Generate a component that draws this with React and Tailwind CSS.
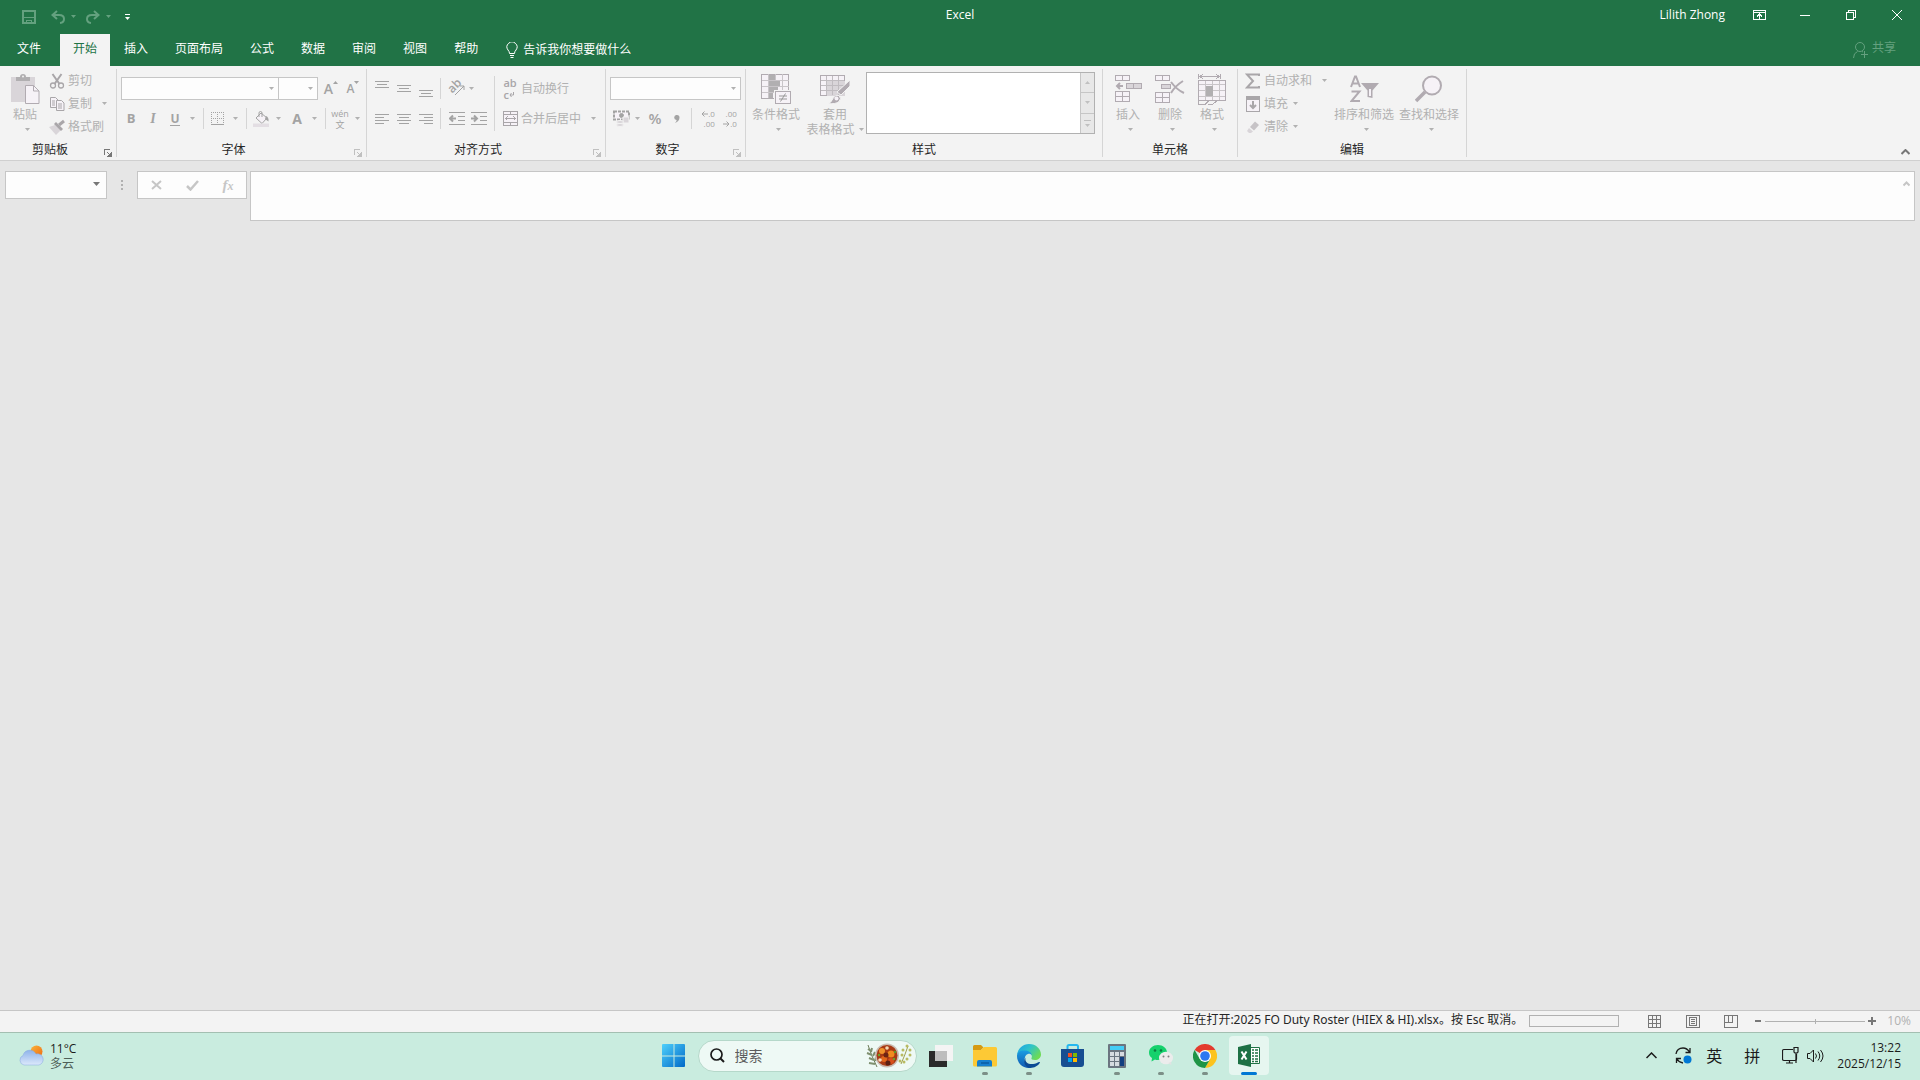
//React
import { useState } from "react";

//* Shared bits
const Caret = ({ className = "" }) => (
  <svg width="5" height="3" viewBox="0 0 5 3" className={className} aria-hidden="true">
    <path d="M0 0h5L2.500 3z" fill="currentColor" />
  </svg>
);

const Svg = ({ w = 16, h = 16, children, className = "", crisp = false }) => (
  <svg
    width={w}
    height={h}
    viewBox={`0 0 ${w} ${h}`}
    fill="none"
    stroke="currentColor"
    shapeRendering={crisp ? "crispEdges" : "auto"}
    className={"shrink-0 " + className}
    aria-hidden="true"
  >
    {children}
  </svg>
);

const IconButton = ({ label, children }) => (
  <button type="button" aria-label={label} className="flex h-[22px] w-[22px] items-center justify-center text-[#a3a3a3]">
    {children}
  </button>
);

const CaretButton = ({ label }) => (
  <button type="button" aria-label={label} className="flex h-[22px] w-[14px] items-center pl-1">
    <Caret />
  </button>
);

const Divider = () => <div className="mx-[3px] h-[21px] w-px bg-[#d5d5d5]" />;

// Small row with an icon and a text
const SmallButton = ({ icon, text, caret }) => (
  <button type="button" className="flex h-[23px] items-center gap-[3px] whitespace-nowrap">
    <span className="flex w-4 justify-center text-[#a9a6a9]">{icon}</span>
    {text}
    {caret && <Caret className={caret} />}
  </button>
);

// Tall button, icon above the text
const BigButton = ({ icon, text, text2, className = "" }) => (
  <button type="button" className={"flex flex-col items-center whitespace-nowrap leading-[15px] " + className}>
    <span className="flex h-[38px] items-center pt-0.5 text-[#b1abb1]">{icon}</span>
    <span>{text}</span>
    <span className="flex h-[14px] items-center gap-1">
      {text2}
      <Caret className={text2 ? "" : "ml-1"} />
    </span>
  </button>
);

const Group = ({ name, launcher, dark, className, children }) => (
  <section className={"flex h-[88px] shrink-0 flex-col border-r border-[#d5d5d5] " + className}>
    <div className="flex flex-1">{children}</div>
    <div className="flex h-4 items-center">
      <h2 className="flex-1 pt-0.5 text-center leading-4 text-[#262626]">{name}</h2>
      {launcher && (
        <button
          type="button"
          aria-label={name + "设置"}
          className={"flex h-4 w-4 items-end justify-center " + (dark ? "text-[#777777]" : "text-[#c0c0c0]")}
        >
          <Svg w={8} h={8} crisp>
            <path d="M.5 6V.5H6M3 3l4 4M7.500 3.500v4h-4" />
            <path d="M7 4v3H4z" fill="currentColor" />
          </Svg>
        </button>
      )}
    </div>
  </section>
);

const Combo = ({ label, className }) => (
  <div className={"relative h-[23px] " + className}>
    <select aria-label={label} className="h-full w-full appearance-none border border-[#c6c6c6] bg-[#fdfdfd]">
      <option></option>
    </select>
    <Caret className="pointer-events-none absolute right-[5px] top-[10px]" />
  </div>
);

//* Ribbon icons
const PasteIcon = () => (
  <Svg w={29} h={30}>
    <path d="M0 3h24v25H0z" fill="#d9d5d9" stroke="none" />
    <path d="M5 7V3h4a3 3 0 0 1 6 0h4v4z" fill="#b1afb1" stroke="none" />
    <circle cx="12" cy="2.500" r="1" fill="#f3f3f3" stroke="none" />
    <path d="M14.500 11.500h8l5.500 5.500v12.500H14.500z" fill="#f6f2f7" />
    <path d="M22.500 11.500V17H28" />
  </Svg>
);

const CutIcon = () => (
  <Svg>
    <path d="M3.500 1l7 10M12.500 1l-7 10" strokeWidth="2" />
    <circle cx="4" cy="12.500" r="2.500" strokeWidth="1.300" />
    <circle cx="12" cy="12.500" r="2.500" strokeWidth="1.300" />
  </Svg>
);

const CopyIcon = () => (
  <Svg>
    <path d="M1.500 1.500h5l2.500 2.500v7.500H1.500z" fill="#f6f2f7" />
    <path d="M7.500 4.500h5l2.500 2.500v7.500H7.500z" fill="#f6f2f7" />
    <path d="M3 5h3M3 7h3M3 9h3M9 8h4M9 10h4M9 12h4" />
  </Svg>
);

const BrushIcon = () => (
  <Svg>
    <path d="M0 8l6-2 6 5-5 5z" fill="#d9d5d9" stroke="none" />
    <path d="M5 5l2-2 7 7-2 2z" fill="currentColor" stroke="none" />
    <path d="M10 6l5-4" strokeWidth="3" />
  </Svg>
);

const BordersIcon = () => (
  <Svg w={14} h={14} crisp>
    <path d="M0 .5h14M0 6.500h14M.5 0v13M6.500 0v13M12.500 0v13" strokeDasharray="1 1" />
    <path d="M0 12.500h13" />
  </Svg>
);

const FillIcon = () => (
  <Svg w={17} h={16}>
    <path d="M3 7l5-5 6 5-5 5.500z" fill="#f6f2f7" />
    <path d="M6 6V2a1.500 1.500 0 0 1 3 0v4" />
    <path d="M13 5q3 1 2.500 5.500L12 8z" fill="currentColor" stroke="none" />
    <path d="M0 12.500h16V16H0z" fill="#e3dee3" stroke="none" />
  </Svg>
);

const LinesIcon = ({ d }) => (
  <Svg w={14} h={18} crisp>
    <path d={d} />
  </Svg>
);

const OrientIcon = () => (
  <Svg w={17} h={17} className="overflow-visible">
    <text x="0" y="10" transform="rotate(-45 6 8)" fill="currentColor" stroke="none" className="text-[12px] font-semibold">
      ab
    </text>
    <path d="M6 15l9-9M11 6h4v4" />
  </Svg>
);

const IndentIcon = ({ right }) => (
  <Svg w={16} h={14}>
    <path d="M0 .5h16M9 4.500h7M9 8.500h7M0 12.500h16" shapeRendering="crispEdges" />
    <path d={right ? "M0 6.500h6M3 3.500l3 3-3 3" : "M1 6.500h6M4 3.500l-3 3 3 3"} strokeWidth="2" />
  </Svg>
);

const MergeIcon = () => (
  <Svg w={15} h={15} crisp>
    <path d="M.5.5h14v14H.5zM.5 3.500h14M.5 11.500h14M7.500 0v4M7.500 11v4" fill="#f6f2f7" />
    <path d="M3 7.500h9M4.500 5.500l-2 2 2 2M10.500 5.500l2 2-2 2" />
  </Svg>
);

const MoneyIcon = () => (
  <Svg w={17} h={17}>
    <path d="M1 1.500h15v8H1z" fill="#f6f2f7" strokeWidth="2" strokeDasharray="3 1" />
    <circle cx="8.500" cy="5.500" r="2" fill="currentColor" />
    <path d="M10 7h6v6h-6z" fill="#d9d5d9" stroke="#f3f3f3" />
    <ellipse cx="7" cy="12" rx="3.500" ry="1.500" fill="#d9d5d9" stroke="#f3f3f3" />
    <ellipse cx="7" cy="15" rx="3.500" ry="1.500" fill="#d9d5d9" stroke="#f3f3f3" />
  </Svg>
);

const CondIcon = () => (
  <Svg w={30} h={30} crisp>
    <path d="M.5.5h27v24H.5z" fill="#f6f2f7" />
    <path d="M.5 6.500h27M.5 12.500h27M.5 18.500h27M7.500 0v24M14.500 0v24M21.500 0v24" stroke="#c9c5c9" />
    <path d="M8 1h6v5H8zM8 7h11v5H8zM8 13h9v5H8zM8 19h4v5H8z" fill="#b1afb1" stroke="none" />
    <path d="M13 16h17v14H13z" fill="#f3f3f3" stroke="none" />
    <path d="M14.500 17.500h15v12h-15z" fill="#f6f2f7" />
    <path d="M18 22h8M18 25h8M24.500 19.500l-5 8" stroke="#999999" shapeRendering="auto" />
  </Svg>
);

const TableIcon = () => (
  <Svg w={30} h={29}>
    <path d="M.5.5h24v20H.5z" fill="#f6f2f7" shapeRendering="crispEdges" />
    <path d="M7 6h18v15H7z" fill="#d9d5d9" stroke="none" />
    <path d="M1 5.500h23M1 10.500h23M1 15.500h23M6.500 1v19M12.500 1v19M18.500 1v19" stroke="#c0bcc0" shapeRendering="crispEdges" />
    <path d="M30 5v6l-9 9-4-3z" fill="currentColor" stroke="#f3f3f3" />
    <path d="M7 28.500q4 0 6-5 2-4 6-3 3 3 0 6-3 3-12 2z" fill="currentColor" stroke="#f3f3f3" />
    <circle cx="16.500" cy="23.500" r="2" fill="#f6f2f7" stroke="none" />
  </Svg>
);

const InsertIcon = () => (
  <Svg w={27} h={28} crisp>
    <path d="M.5.5h14v5H.5zM7.500.5v5M.5 16.500h14v10H.5zM7.500 16.500v10M.5 21.500h14" fill="#f6f2f7" />
    <path d="M11.500 8.500h15v5h-15zM18.500 8.500v5" fill="#d9d5d9" />
    <path d="M2 11h6M5 8l-3 3 3 3" strokeWidth="2" shapeRendering="auto" />
  </Svg>
);

const DeleteIcon = () => (
  <Svg w={30} h={28}>
    <path d="M.5.5h14v5H.5zM7.500.5v5M.5 17.500h14v10H.5zM7.500 17.500v10M.5 22.500h14" fill="#f6f2f7" shapeRendering="crispEdges" />
    <path d="M6.500 9.500h9v4h-9z" fill="#d9d5d9" shapeRendering="crispEdges" />
    <path d="M16 7q6 8 13 11M28 6q-8 5-12 12" strokeWidth="2" />
  </Svg>
);

const FormatIcon = () => (
  <Svg w={28} h={31} crisp>
    <path d="M.5 0v5M22.500 0v5M2 2.500h19M5 0L2 2.500 5 5M18 0l3 2.500L18 5" />
    <path d="M.5 6.500h27v20H.5z" fill="#f6f2f7" />
    <path d="M1 10.500h26M1 22.500h26M7.500 7v19M14.500 7v19M21.500 7v19M1 16.500h26" stroke="#c9c5c9" />
    <path d="M8 11.500h7v10H8z" fill="#b1afb1" stroke="none" />
    <path d="M.5 27v3h7l3-3M10 30h5l4-3" />
  </Svg>
);

const SumIcon = () => (
  <Svg>
    <path d="M14 3V1.500H2L8 8l-6 6.500h12V13" strokeWidth="2" />
  </Svg>
);

const DownIcon = () => (
  <Svg w={14} h={16} crisp>
    <path d="M.5.5h13v15H.5z" fill="#f6f2f7" />
    <path d="M1 2.500h12" strokeWidth="3" />
    <path d="M7 5v7M4 9l3 3 3-3" strokeWidth="2" shapeRendering="auto" />
  </Svg>
);

const EraserIcon = () => (
  <Svg w={14} h={14}>
    <path d="M4 7l5-5.500 4 3.500-5 5.500z" fill="#c6c3c6" stroke="none" />
    <path d="M3 8l4 3.500L5 13H3L1 11z" fill="#d9d5d9" stroke="none" />
  </Svg>
);

const SortIcon = () => (
  <Svg w={29} h={28}>
    <path d="M1 12L5 1.500h1L10 12M2.500 8.500h6M1.500 16.500h8L1.500 26H10" strokeWidth="2" />
    <path d="M11 8h18l-6.500 7.500V23l-5-1v-6.500z" fill="currentColor" stroke="none" />
    <path d="M19 14h2v7h-2z" fill="#f6f2f7" stroke="none" />
  </Svg>
);

const FindIcon = () => (
  <Svg w={28} h={28}>
    <circle cx="17" cy="10.500" r="9" fill="#f6f2f7" strokeWidth="2" />
    <path d="M10 17l-9 9" strokeWidth="3.500" />
  </Svg>
);

//* Title bar
const TitleBar = () => (
  <header className="grid h-[34px] grid-cols-[1fr_auto_1fr] text-white">
    <div className="flex items-center pb-px pl-[22px] text-[#64a17f]">
      <button type="button" aria-label="保存">
        <Svg w={14} h={14} crisp>
          <path d="M1 1h12v12H1z" strokeWidth="2" />
          <path d="M2 7.500h10M4.500 13v-3h5v3" strokeWidth="1" />
        </Svg>
      </button>
      <button type="button" aria-label="撤消" className="ml-[15px] flex items-center gap-[6px]">
        <Svg w={14} h={14}>
          <path d="M6 1L1.500 5 6 9M2 5h6q5 0 5 4 0 3.500-4 4" strokeWidth="2" />
        </Svg>
        <Caret />
      </button>
      <button type="button" aria-label="恢复" className="ml-[10px] flex items-center gap-[6px]">
        <Svg w={14} h={14}>
          <path d="M8 1l4.500 4L8 9M12 5H6Q1 5 1 9q0 3.500 4 4" strokeWidth="2" />
        </Svg>
        <Caret />
      </button>
      <button type="button" aria-label="自定义快速访问工具栏" className="ml-[14px] text-white">
        <Svg w={5} h={6} crisp>
          <path d="M0 .5h5" />
          <path d="M0 3h5L2.500 6z" fill="currentColor" stroke="none" shapeRendering="auto" />
        </Svg>
      </button>
    </div>
    <h1 className="leading-[30px]">Excel</h1>
    <div className="flex h-[30px] items-center justify-end">
      <span className="pr-[11px]">Lilith Zhong</span>
      <button type="button" aria-label="功能区显示选项" className="flex h-full w-[46px] items-center justify-center">
        <Svg w={13} h={10} crisp>
          <path d="M.5.5h12v9H.5zM0 2.500h13M6.500 4v5M4 6.500L6.500 4 9 6.500" />
        </Svg>
      </button>
      <button type="button" aria-label="最小化" className="flex h-full w-[46px] items-center justify-center">
        <Svg w={10} h={10} crisp>
          <path d="M0 5.500h10" />
        </Svg>
      </button>
      <button type="button" aria-label="向下还原" className="flex h-full w-[46px] items-center justify-center">
        <Svg w={10} h={10} crisp>
          <path d="M.5 2.500h7v7h-7zM2.500 2V.5h7v7H8" />
        </Svg>
      </button>
      <button type="button" aria-label="关闭" className="flex h-full w-[46px] items-center justify-center">
        <Svg w={10} h={10}>
          <path d="M0 0l10 10M10 0L0 10" />
        </Svg>
      </button>
    </div>
  </header>
);

const tabs = ["开始", "插入", "页面布局", "公式", "数据", "审阅", "视图", "帮助"];

const TabBar = () => {
  const [active, setActive] = useState("开始");
  return (
    <nav className="flex h-8 gap-px text-white">
      <button type="button" className="mr-px px-[17px] pb-0.5">
        文件
      </button>
      {tabs.map((tab) => (
        <button
          key={tab}
          type="button"
          onClick={() => setActive(tab)}
          className={"px-[13px] pb-0.5 " + (tab === active ? "bg-[#f3f3f3] text-[#217346]" : "")}
        >
          {tab}
        </button>
      ))}
      <button type="button" className="flex items-center gap-[5px] pl-[14px]">
        <Svg w={12} h={16}>
          <path d="M3.500 11.500Q3.500 9.500 2 8a5 5 0 1 1 8 0q-1.500 1.500-1.500 3.500zM4 13.500h4M4.500 15.500h3" />
        </Svg>
        告诉我你想要做什么
      </button>
      <button type="button" className="ml-auto flex items-center gap-1 pb-1 pr-6 text-[#64a17f]">
        <Svg w={15} h={16} className="mt-1">
          <circle cx="7" cy="5" r="4.500" />
          <path d="M.5 16q0-5 4-6.500M9 9.500l1 .5M11.500 9v7M8 12.500h7" />
        </Svg>
        共享
      </button>
    </nav>
  );
};

//* Ribbon
const Ribbon = () => (
  <div className="flex border-b border-[#d0d0d0] bg-[#f3f3f3] pb-[3px] pt-[3px] text-[#b1b1b1]">
    <Group name="剪贴板" launcher dark className="w-[117px]">
      <BigButton icon={<PasteIcon />} text="粘贴" className="ml-[7px] w-9" />
      <div className="ml-[6px] flex flex-col items-start">
        <SmallButton icon={<CutIcon />} text="剪切" />
        <SmallButton icon={<CopyIcon />} text="复制" caret="ml-[7px]" />
        <SmallButton icon={<BrushIcon />} text="格式刷" />
      </div>
    </Group>

    <Group name="字体" launcher className="w-[250px]">
      <div className="flex flex-col pl-[3px] pt-1">
        <div className="flex h-[31px] items-center pl-px">
          <Combo label="字体" className="w-[158px]" />
          <Combo label="字号" className="-ml-px w-[40px]" />
          <div className="flex pl-0.5">
            <IconButton label="增大字号">
              <span className="text-[14px] font-semibold leading-4">A</span>
              <Svg w={5} h={3} className="mb-3">
                <path d="M0 3h5L2.500 0z" fill="currentColor" stroke="none" />
              </Svg>
            </IconButton>
            <IconButton label="减小字号">
              <span className="text-[12px] font-semibold leading-4">A</span>
              <Caret className="mb-3" />
            </IconButton>
          </div>
        </div>
        <div className="flex h-[29px] items-center">
          <IconButton label="加粗">
            <b className="text-[13px]">B</b>
          </IconButton>
          <IconButton label="倾斜">
            <span className="font-['Liberation_Serif',serif] text-[14px] font-bold italic">I</span>
          </IconButton>
          <IconButton label="下划线">
            <span className="border-b border-current text-[12px] font-bold leading-[13px]">U</span>
          </IconButton>
          <CaretButton label="下划线样式" />
          <Divider />
          <IconButton label="边框">
            <BordersIcon />
          </IconButton>
          <CaretButton label="更多边框" />
          <Divider />
          <IconButton label="填充颜色">
            <FillIcon />
          </IconButton>
          <CaretButton label="更多填充颜色" />
          <IconButton label="字体颜色">
            <span className="text-[14px] font-bold">A</span>
          </IconButton>
          <CaretButton label="更多字体颜色" />
          <Divider />
          <IconButton label="拼音">
            <span className="flex flex-col items-center text-[9px] leading-[11px]">
              <span>wén</span>
              <span>文</span>
            </span>
          </IconButton>
          <CaretButton label="拼音设置" />
        </div>
      </div>
    </Group>

    <Group name="对齐方式" launcher className="w-[239px]">
      <div className="flex flex-col pl-1 pt-1">
        <div className="flex h-[31px] items-center">
          <IconButton label="顶端对齐">
            <LinesIcon d="M0 1.500h14M2 4.500h10M0 7.500h14" />
          </IconButton>
          <IconButton label="垂直居中">
            <LinesIcon d="M0 5.500h14M2 8.500h10M0 11.500h14" />
          </IconButton>
          <IconButton label="底端对齐">
            <LinesIcon d="M0 10.500h14M2 13.500h10M0 16.500h14" />
          </IconButton>
          <Divider />
          <div className="flex pl-0.5">
            <IconButton label="方向">
              <OrientIcon />
            </IconButton>
            <button type="button" aria-label="方向选项" className="flex items-center pl-px">
              <Caret />
            </button>
          </div>
        </div>
        <div className="flex h-[29px] items-center">
          <IconButton label="左对齐">
            <LinesIcon d="M0 4.500h14M0 7.500h9M0 10.500h14M0 13.500h9" />
          </IconButton>
          <IconButton label="居中">
            <LinesIcon d="M0 4.500h14M2 7.500h10M0 10.500h14M2 13.500h10" />
          </IconButton>
          <IconButton label="右对齐">
            <LinesIcon d="M0 4.500h14M5 7.500h9M0 10.500h14M5 13.500h9" />
          </IconButton>
          <Divider />
          <div className="flex pl-0.5">
            <IconButton label="减少缩进量">
              <IndentIcon />
            </IconButton>
            <IconButton label="增加缩进量">
              <IndentIcon right />
            </IconButton>
          </div>
        </div>
      </div>
      <div className="ml-1 mt-[7px] h-[55px] w-px bg-[#d5d5d5]" />
      <div className="flex flex-col pl-[7px] pt-1">
        <div className="flex h-[31px] items-center">
          <SmallButton
            icon={
              <span className="flex flex-col text-[11px] font-semibold leading-[12px]">
                <span>ab</span>
                <span className="flex items-center">
                  c
                  <Svg w={5} h={5}>
                    <path d="M4.500 0v3H1M2.500 1L1 3l1.500 2" />
                  </Svg>
                </span>
              </span>
            }
            text="自动换行"
          />
        </div>
        <div className="flex h-[29px] items-center">
          <SmallButton icon={<MergeIcon />} text="合并后居中" caret="ml-[7px]" />
        </div>
      </div>
    </Group>

    <Group name="数字" launcher className="w-[140px]">
      <div className="flex flex-col pl-1 pt-1">
        <div className="flex h-[31px] items-center">
          <Combo label="数字格式" className="w-[131px]" />
        </div>
        <div className="flex h-[29px] items-center">
          <IconButton label="会计数字格式">
            <MoneyIcon />
          </IconButton>
          <button type="button" aria-label="更多会计格式" className="flex h-[22px] w-3 items-center pl-[3px]">
            <Caret />
          </button>
          <IconButton label="百分比样式">
            <span className="text-[15px] font-semibold">%</span>
          </IconButton>
          <IconButton label="千位分隔样式">
            <Svg w={6} h={8}>
              <path d="M3 0a2.500 2.500 0 0 1 2.500 2.500Q5.500 6 1 8q2-2 1.500-3A2.500 2.500 0 0 1 3 0z" fill="currentColor" stroke="none" />
            </Svg>
          </IconButton>
          <Divider />
          <div className="flex pl-0.5">
            <IconButton label="增加小数位数">
              <span className="flex flex-col items-end text-[8px] leading-[10px]">
                <span className="flex items-center">
                  <Svg w={7} h={6}>
                    <path d="M1 3h6M3.500.5L1 3l2.500 2.500" />
                  </Svg>
                  .0
                </span>
                <span>.00</span>
              </span>
            </IconButton>
            <IconButton label="减少小数位数">
              <span className="flex flex-col items-end text-[8px] leading-[10px]">
                <span>.00</span>
                <span className="flex items-center">
                  <Svg w={7} h={6}>
                    <path d="M0 3h6M3.500.5L6 3 3.500 5.500" />
                  </Svg>
                  .0
                </span>
              </span>
            </IconButton>
          </div>
        </div>
      </div>
    </Group>

    <Group name="样式" className="w-[357px]">
      <BigButton icon={<CondIcon />} text="条件格式" className="w-[60px]" />
      <BigButton icon={<TableIcon />} text="套用" text2="表格格式" className="w-[58px]" />
      <div className="ml-0.5 mt-[3px] flex h-[62px] w-[229px] border border-[#b1b1b1] bg-white">
        <div className="ml-auto flex w-[14px] flex-col divide-y divide-[#c6c6c6] border-l border-[#c6c6c6] bg-[#e8e8e8] text-[#c0c0c0]">
          <button type="button" aria-label="上一行" className="flex flex-1 items-center justify-center">
            <Caret className="rotate-180" />
          </button>
          <button type="button" aria-label="下一行" className="flex flex-1 items-center justify-center">
            <Caret />
          </button>
          <button type="button" aria-label="其他" className="flex flex-1 flex-col items-center justify-center gap-[3px]">
            <span className="h-px w-[7px] bg-current" />
            <Caret />
          </button>
        </div>
      </div>
    </Group>

    <Group name="单元格" className="w-[135px]">
      <div className="flex pl-1">
        <BigButton icon={<InsertIcon />} text="插入" className="w-[42px]" />
        <BigButton icon={<DeleteIcon />} text="删除" className="w-[42px]" />
        <BigButton icon={<FormatIcon />} text="格式" className="w-[42px]" />
      </div>
    </Group>

    <Group name="编辑" className="w-[229px]">
      <div className="flex w-[94px] flex-col items-start pl-[7px]">
        <SmallButton icon={<SumIcon />} text="自动求和" caret="ml-[7px]" />
        <SmallButton icon={<DownIcon />} text="填充" caret="ml-0.5" />
        <SmallButton icon={<EraserIcon />} text="清除" caret="ml-0.5" />
      </div>
      <BigButton icon={<SortIcon />} text="排序和筛选" className="w-[64px]" />
      <BigButton icon={<FindIcon />} text="查找和选择" className="w-[66px]" />
    </Group>

    <button type="button" aria-label="折叠功能区" className="ml-auto self-end pb-0.5 pr-[10px] text-[#777777]">
      <Svg w={9} h={6}>
        <path d="M.5 5l4-4 4 4" strokeWidth="2" />
      </Svg>
    </button>
  </div>
);

//* Formula bar
const FormulaBar = () => (
  <div className="flex items-start pl-[5px] pr-[5px] pt-[10px] text-[#c6c6c6]">
    <div className="relative h-7 w-[102px]">
      <input aria-label="名称框" className="h-full w-full border border-[#c6c6c6] bg-[#fdfdfd] px-1 text-[#262626] outline-none" />
      <Svg w={7} h={4} className="pointer-events-none absolute right-[7px] top-[11px] text-[#777777]">
        <path d="M0 0h7L3.500 4z" fill="currentColor" stroke="none" />
      </Svg>
    </div>
    <div className="flex h-7 w-[30px] flex-col items-center justify-center gap-0.5">
      <span className="h-0.5 w-0.5 bg-[#b1b1b1]" />
      <span className="h-0.5 w-0.5 bg-[#b1b1b1]" />
      <span className="h-0.5 w-0.5 bg-[#b1b1b1]" />
    </div>
    <div className="flex h-7 w-[110px] items-center border border-[#c6c6c6] bg-[#fdfdfd]">
      <button type="button" aria-label="取消" className="flex flex-1 justify-center">
        <Svg w={11} h={10}>
          <path d="M1 1l9 8M10 1L1 9" strokeWidth="2" />
        </Svg>
      </button>
      <button type="button" aria-label="输入" className="flex flex-1 justify-center">
        <Svg w={13} h={11}>
          <path d="M1 6l3.500 3.500L12 1" strokeWidth="2.500" />
        </Svg>
      </button>
      <button type="button" aria-label="插入函数" className="flex-1 text-center font-['Liberation_Serif',serif] text-[15px] font-bold italic leading-5">
        f<span className="text-[12px]">x</span>
      </button>
    </div>
    <div className="ml-[3px] flex flex-1 border border-[#c6c6c6] bg-[#fdfdfd]">
      <textarea aria-label="编辑栏" className="block h-12 flex-1 resize-none px-1 text-[#262626] outline-none" />
      <button type="button" aria-label="折叠编辑栏" className="self-start pr-1 pt-[9px]">
        <Svg w={7} h={6}>
          <path d="M.5 4.500l3-3 3 3" strokeWidth="2" />
        </Svg>
      </button>
    </div>
  </div>
);

//* Status bar
const StatusBar = () => {
  const [zoom, setZoom] = useState(50);
  return (
    <footer className="flex h-[23px] items-center border-b border-t border-b-[#a3bfb1] border-t-[#c6c6c6] bg-[#f3f3f3] pb-px pr-[9px] text-[#777777]">
      <p className="ml-auto pb-0.5 font-['Noto_Sans','Noto_Sans_CJK_SC',sans-serif] text-[#262626]">
        正在打开:2025 FO Duty Roster (HIEX &amp; HI).xlsx。按 Esc 取消。
      </p>
      <div className="ml-[6px] h-3 w-[90px] border border-[#b1b1b1]" />
      <button type="button" aria-label="普通" className="ml-[29px]">
        <Svg w={13} h={13} crisp>
          <path d="M.5.5h12v12H.5zM4.500 0v13M8.500 0v13M0 4.500h13M0 8.500h13" />
        </Svg>
      </button>
      <button type="button" aria-label="页面布局视图" className="ml-[25px]">
        <Svg w={14} h={13} crisp>
          <path d="M.5.5h13v12H.5zM3.500 2.500h7v8h-7zM5 4.500h4M5 6.500h4M5 8.500h4" />
        </Svg>
      </button>
      <button type="button" aria-label="分页预览" className="ml-6">
        <Svg w={14} h={13} crisp>
          <path d="M.5.5h13v12H.5zM4.500 0v7M8.500 0v7M0 7.500h9" />
        </Svg>
      </button>
      <button type="button" aria-label="缩小" className="ml-[17px]">
        <Svg w={6} h={8} crisp>
          <path d="M0 4h6" strokeWidth="2" />
        </Svg>
      </button>
      <div className="ml-1 flex h-[9px] w-[100px] items-center bg-[linear-gradient(#b1b1b1,#b1b1b1)] bg-[length:100%_1px] bg-center bg-no-repeat">
        <input
          type="range"
          aria-label="显示比例"
          value={zoom}
          onChange={(e) => setZoom(e.target.value)}
          className="h-[5px] w-full appearance-none bg-transparent [&::-webkit-slider-thumb]:h-[5px] [&::-webkit-slider-thumb]:w-px [&::-webkit-slider-thumb]:appearance-none [&::-webkit-slider-thumb]:bg-[#b1b1b1]"
        />
      </div>
      <button type="button" aria-label="放大" className="ml-[3px]">
        <Svg w={8} h={8} crisp>
          <path d="M0 4h8M4 0v8" strokeWidth="2" />
        </Svg>
      </button>
      <span className="ml-[11px] pb-px text-[#b1b1b1]">10%</span>
    </footer>
  );
};

//* Taskbar icons
const WeatherIcon = () => (
  <svg width="25" height="21" viewBox="0 0 25 21" aria-hidden="true">
    <defs>
      <linearGradient id="sun" x1="0" y1="0" x2="1" y2="1">
        <stop offset="0" stopColor="#f9b43c" />
        <stop offset="1" stopColor="#f06a10" />
      </linearGradient>
      <linearGradient id="cloud" x1="0" y1="0" x2="0" y2="1">
        <stop offset="0" stopColor="#8fb4ea" />
        <stop offset="1" stopColor="#dce8fb" />
      </linearGradient>
    </defs>
    <circle cx="17.500" cy="6.500" r="6" fill="url(#sun)" />
    <path d="M5 20a5 5 0 0 1-1-9.500A7 7 0 0 1 17 9a5.500 5.500 0 0 1 3 11z" fill="url(#cloud)" stroke="#86a8e0" strokeWidth=".5" />
  </svg>
);

const StartIcon = () => (
  <svg width="24" height="24" viewBox="0 0 24 24" aria-hidden="true">
    <defs>
      <linearGradient id="win" x1="0" y1="0" x2="1" y2="1">
        <stop offset="0" stopColor="#4fd0fb" />
        <stop offset="1" stopColor="#0069c8" />
      </linearGradient>
    </defs>
    <path d="M0 1q0-1 1-1h10.500v11.500H0zM12.500 0H22q1 0 1 1v10.500H12.500zM0 12.500h11.500V23H1q-1 0-1-1zM12.500 12.500H23V22q0 1-1 1h-9.500z" fill="url(#win)" />
  </svg>
);

const FoodIcon = () => (
  <svg width="46" height="26" viewBox="0 0 46 26" aria-hidden="true">
    <g fill="none" strokeWidth="1">
      <path d="M2 2q3 10 9 22" stroke="#6d7c58" />
      <path d="M2 6l3 2M1 10l5 2M3 15l5 2M3 20l6 1M6 5l-1 4M9 9l-2 4M10 14l-1 4" stroke="#7f9070" strokeWidth="2" />
      <path d="M42 3q-3 9-7 18" stroke="#a0a050" />
    </g>
    <g fill="#b9bb62">
      <circle cx="41" cy="3" r="1.500" />
      <circle cx="44" cy="7" r="1.500" />
      <circle cx="37" cy="7" r="1.500" />
      <circle cx="44" cy="12" r="1.500" />
      <circle cx="36" cy="12" r="1.500" />
      <circle cx="41" cy="16" r="1.500" />
      <circle cx="34" cy="18" r="1.500" />
      <circle cx="38" cy="19" r="1.500" />
    </g>
    <circle cx="21" cy="12.500" r="12" fill="#c9bcb2" />
    <circle cx="21" cy="12.500" r="10.500" fill="#a83a14" />
    <circle cx="16" cy="8" r="3" fill="#f0922c" />
    <circle cx="25" cy="11" r="3.500" fill="#f08a1e" />
    <circle cx="18" cy="16" r="3" fill="#e2661a" />
    <circle cx="25" cy="18" r="3" fill="#d8501c" />
    <circle cx="20" cy="12" r="2.500" fill="#6e2413" />
    <circle cx="22" cy="20" r="2.500" fill="#5c2012" />
    <circle cx="21" cy="5" r="1.800" fill="#f3d9b4" />
    <circle cx="14" cy="17" r="1.800" fill="#f3dcc4" />
    <circle cx="29" cy="9" r="1.200" fill="#5f9a26" />
    <circle cx="13" cy="12" r="1.200" fill="#6ea32b" />
    <circle cx="28" cy="16" r="1.200" fill="#6ea32b" />
  </svg>
);

const TaskViewIcon = () => (
  <svg width="24" height="22" viewBox="0 0 24 22" aria-hidden="true">
    <path d="M0 6h18v16H0z" fill="#2a2a2a" />
    <path d="M6 0h18v16H6z" fill="#f4f4f4" />
    <path d="M6 6h12v10H6z" fill="#bdbdbd" />
  </svg>
);

const ExplorerIcon = () => (
  <svg width="24" height="22" viewBox="0 0 24 22" aria-hidden="true">
    <path d="M0 1.500Q0 0 1.500 0H8l2.500 2.500L8 5H0z" fill="#d69a12" />
    <path d="M0 5h8l3-3h11.500Q24 2 24 3.500V20q0 1.500-1.500 1.500h-21Q0 21.500 0 20z" fill="#fdc935" />
    <path d="M4 21.500V17q0-2 2-2h11q2 0 2 2v4.500z" fill="#1680cf" />
    <path d="M8 18h8" stroke="#0a5ca3" strokeWidth="1.500" />
  </svg>
);

const EdgeIcon = () => (
  <svg width="24" height="24" viewBox="0 0 24 24" aria-hidden="true">
    <defs>
      <linearGradient id="edge-top" x1="0" y1="0" x2="1" y2=".6">
        <stop offset="0" stopColor="#1a9fe8" />
        <stop offset=".5" stopColor="#2fc3c9" />
        <stop offset="1" stopColor="#6ddb54" />
      </linearGradient>
      <linearGradient id="edge-left" x1="0" y1="0" x2="0" y2="1">
        <stop offset="0" stopColor="#1b9de2" />
        <stop offset="1" stopColor="#1058b0" />
      </linearGradient>
    </defs>
    <path d="M0 11C1 4 6 0 12 0c7 0 12 5 12 10.500 0 3.500-3 5.500-6 5.500-3 0-4-1-3.500-2 .8-1 .8-5.500-4.500-5.500C5 8.500 1 9 0 11z" fill="url(#edge-top)" />
    <path d="M0 12c0-3.500 3-5.500 7-5.500 4.500 0 7.500 2 8 5-1-1.500-2.500-2-4-1.500-3.500 1-5 7-1 11 1 1.500 3 2.500 4.500 2.800Q12 24 12 24C5 24 0 18.500 0 12z" fill="url(#edge-left)" />
    <path d="M8.500 13.500c-1 5 3 7 7.500 6.500 2.500-.2 4.500-1.200 6-2 .8-.3 1.200.2.800.8C21 22 17 24 13.500 24c-5 0-8-6-5-10.500z" fill="#0c4a94" />
  </svg>
);

const StoreIcon = () => (
  <svg width="24" height="24" viewBox="0 0 24 24" aria-hidden="true">
    <path d="M6.500 6V2.500Q6.500 1 8 1h7.500Q17 1 17 2.500V6" fill="none" stroke="#25b8ef" strokeWidth="2" />
    <path d="M0 5h23v15q0 3-3 3H3q-3 0-3-3z" fill="#174e91" />
    <path d="M7 9h4v4H7z" fill="#f25022" />
    <path d="M12 9h4v4h-4z" fill="#7fba00" />
    <path d="M7 14h4v4H7z" fill="#00a4ef" />
    <path d="M12 14h4v4h-4z" fill="#ffb900" />
  </svg>
);

const CalcIcon = () => (
  <svg width="18" height="24" viewBox="0 0 18 24" aria-hidden="true">
    <rect width="18" height="24" rx="1" fill="#6b7580" />
    <path d="M2 2h14v4H2z" fill="#43cdf5" />
    <path d="M2 8h4v4H2zM7 8h4v4H7zM12 8h4v4h-4zM2 13h4v4H2zM7 13h4v4H7zM2 18h4v4H2zM7 18h4v4H7z" fill="#d6dbe0" />
    <path d="M12 13h4v9h-4z" fill="#123f80" />
  </svg>
);

const WechatIcon = () => (
  <svg width="24" height="21" viewBox="0 0 24 21" aria-hidden="true">
    <path d="M9 0c5 0 9 3.300 9 7.500S14 15 9 15q-2 0-3-.5L2.500 16.500l.5-3.500Q0 11 0 7.500C0 3.300 4 0 9 0z" fill="#15d16c" />
    <ellipse cx="17" cy="13" rx="7" ry="6.300" fill="#ececec" />
    <path d="M19 18l3.500 2-.5-3z" fill="#e2e2e2" />
    <circle cx="6" cy="5.500" r="1.300" fill="#0b7a3e" />
    <circle cx="12" cy="5.500" r="1.300" fill="#0b7a3e" />
    <circle cx="14.500" cy="11.500" r="1" fill="#808080" />
    <circle cx="19.500" cy="11.500" r="1" fill="#808080" />
  </svg>
);

const ChromeIcon = () => (
  <svg width="24" height="24" viewBox="0 0 24 24" aria-hidden="true">
    <path d="M12 12L1.600 6A12 12 0 0 1 22.400 6z" fill="#e33b2e" />
    <path d="M12 12V6h10.400A12 12 0 0 1 12 24l5.200-9z" fill="#fcc31e" />
    <path d="M12 12l5.200 3L12 24A12 12 0 0 1 1.600 6l5.200 9z" fill="#1f9446" />
    <circle cx="12" cy="12" r="6" fill="#fff" />
    <circle cx="12" cy="12" r="4.800" fill="#2b78f0" />
  </svg>
);

const ExcelIcon = () => (
  <svg width="22" height="24" viewBox="0 0 22 24" aria-hidden="true">
    <path d="M12 3.500h9.500v16H12z" fill="#fff" stroke="#217346" />
    <path d="M14 6h2M17 6h3M14 9h2M17 9h3M14 12h2M17 12h3M14 15h2M17 15h3M14 17.500h2M17 17.500h3" stroke="#217346" strokeWidth="1.300" />
    <path d="M0 3l13-3v23L0 20z" fill="#1e7145" />
    <path d="M3.500 7.500l5 8M8.500 7.500l-5 8" stroke="#fff" strokeWidth="2" />
  </svg>
);

const apps = [
  { name: "任务视图", icon: <TaskViewIcon />, running: false },
  { name: "文件资源管理器", icon: <ExplorerIcon />, running: true },
  { name: "Microsoft Edge", icon: <EdgeIcon />, running: true },
  { name: "Microsoft Store", icon: <StoreIcon />, running: false },
  { name: "计算器", icon: <CalcIcon />, running: true },
  { name: "微信", icon: <WechatIcon />, running: true },
  { name: "Google Chrome", icon: <ChromeIcon />, running: true },
  { name: "Excel", icon: <ExcelIcon />, running: true, active: true },
];

const Taskbar = () => (
  <div className="grid h-[47px] grid-cols-[1fr_auto_1fr] items-center bg-[#c9ecdf] pb-0.5 text-[#1b1b1b]">
    <button type="button" className="flex items-center gap-[6px] pl-[19px] text-left leading-[15px]">
      <WeatherIcon />
      <span className="flex flex-col">
        <span>11°C</span>
        <span className="text-[#4f5f58]">多云</span>
      </span>
    </button>

    <div className="flex items-center">
      <button type="button" aria-label="开始" className="flex w-11 justify-center">
        <StartIcon />
      </button>
      <label className="ml-0.5 flex h-8 w-[219px] items-center rounded-full border border-[#b5d8ca] bg-[#eef9f5] pl-[11px] pr-1">
        <Svg w={15} h={15}>
          <circle cx="6.500" cy="6.500" r="5.500" strokeWidth="1.700" />
          <path d="M10.500 10.500L14 14" strokeWidth="2" />
        </Svg>
        <input
          type="text"
          aria-label="搜索"
          placeholder="搜索"
          className="ml-[10px] min-w-0 flex-1 bg-transparent text-[14px] leading-5 outline-none placeholder:text-[#5c5c5c]"
        />
        <FoodIcon />
      </label>
      <div className="flex gap-1 pl-1">
        {apps.map((app) => (
          <button
            key={app.name}
            type="button"
            aria-label={app.name}
            className={"relative flex h-[39px] w-10 items-center justify-center rounded " + (app.active ? "bg-[#e6f6f0]" : "")}
          >
            {app.icon}
            {app.running && (
              <span
                className={
                  "absolute bottom-0 h-[3px] rounded-full " + (app.active ? "w-4 bg-[#0078d4]" : "w-[6px] bg-[#7c8f87]")
                }
              />
            )}
          </button>
        ))}
      </div>
    </div>

    <div className="flex items-center justify-end pr-[19px]">
      <button type="button" aria-label="显示隐藏的图标">
        <Svg w={11} h={7}>
          <path d="M.5 6l5-5 5 5" strokeWidth="1.500" />
        </Svg>
      </button>
      <button type="button" aria-label="更新" className="ml-[18px]">
        <Svg w={17} h={17}>
          <path d="M1 7Q2 1 8 1q4 0 6.500 4M15 1v4.500h-4.500M1.500 16v-4.500H6M2 12q2 3.500 6 4" strokeWidth="1.300" />
          <circle cx="12.500" cy="12.500" r="4" fill="#0078d4" stroke="none" />
        </Svg>
      </button>
      <button type="button" className="ml-[14px] text-[16px] leading-5">
        英
      </button>
      <button type="button" className="ml-[22px] text-[16px] leading-5">
        拼
      </button>
      <button type="button" aria-label="网络和音量" className="ml-[22px] flex items-center gap-2">
        <Svg w={17} h={17}>
          <path d="M11 2.500H2Q.5 2.500.5 4v8q0 1.500 1.500 1.500h11q1.500 0 1.500-1.500V7M4 16h7M7.500 14v2" strokeWidth="1.200" />
          <path d="M12 .5h4V5q0 1-2 1t-2-1zM14 6v10" strokeWidth="1.200" />
        </Svg>
        <Svg w={17} h={14}>
          <path d="M.5 4.500H3l3.500-3.500v12L3 9.500H.5zM8.500 4.500q2 2.500 0 5M11 2.500q3.500 4.500 0 9M13.500 1q5 6 0 12" />
        </Svg>
      </button>
      <button type="button" className="ml-[13px] text-right leading-4">
        13:22
        <br />
        2025/12/15
      </button>
    </div>
  </div>
);

const App = () => {
  return (
    <div className="flex min-h-screen flex-col bg-[#e6e6e6] font-['Open_Sans','Noto_Sans_CJK_SC',sans-serif] text-[12px]">
      <div className="bg-[#217346]">
        <TitleBar />
        <TabBar />
      </div>
      <Ribbon />
      <FormulaBar />
      <main className="flex-1" />
      <StatusBar />
      <Taskbar />
    </div>
  );
};

export default App;
